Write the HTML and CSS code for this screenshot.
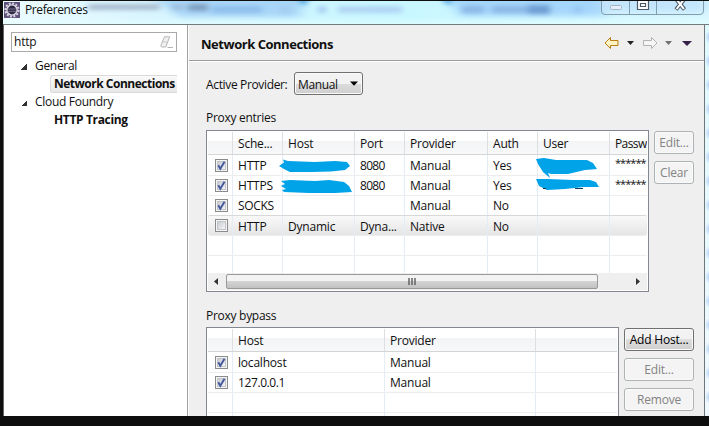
FILE: index.html
```html
<!DOCTYPE html>
<html lang="en">
<head>
<meta charset="utf-8">
<title>Preferences</title>
<link rel="stylesheet" href="styles.css">
</head>
<body>
<svg class="defs" width="0" height="0" aria-hidden="true">
  <defs>
    <linearGradient id="boxFill" x1="0" y1="0" x2="1" y2="1"><stop offset="0" stop-color="#c4c8d0"/><stop offset="1" stop-color="#f8f8f8"/></linearGradient>
    <symbol id="box" viewBox="0 0 13 13"><rect x=".5" y=".5" width="12" height="12" fill="#f4f4f4" stroke="#8b8c8e"/><rect x="2.5" y="2.5" width="8" height="8" fill="url(#boxFill)" stroke="#c3c5ca"/></symbol>
    <symbol id="checked" viewBox="0 0 13 13"><use href="#box"/><path d="M3.3 6.2l2 3.6L9.5 2.8" fill="none" stroke="#46599c" stroke-width="1.9"/></symbol>
  </defs>
</svg>
<div class="window">
  <header class="titlebar">
    <svg class="glass" width="706" height="23" viewBox="3 1 706 23" aria-hidden="true">
      <defs>
        <filter id="wide" x="-20%" y="-80%" width="140%" height="260%"><feGaussianBlur stdDeviation="6 3"/></filter>
        <filter id="soft" x="-20%" y="-80%" width="140%" height="260%"><feGaussianBlur stdDeviation="3 2"/></filter>
      </defs>
      <g filter="url(#wide)">
        <path d="M150 -4H305L300 17H180z" fill="#a8d6f8"/>
        <path d="M446 -4H606V16H460z" fill="#a5d6fb"/>
        <path d="M600 -4H705V12H600z" fill="#b9dffa"/>
      </g>
      <g filter="url(#soft)">
        <path d="M88 4H160V10H88z" fill="#a9bdd0"/><path d="M172 4H184V10H172z" fill="#9fbfdd"/><path d="M188 4H208V11H188z" fill="#7f9fc0"/>
        <path d="M212 6H262V13H212z" fill="#8fc0ec"/><path d="M280 6H290V13H280zM318 6H326V13H318z" fill="#a4ccf0"/><path d="M338 6H402V13H338z" fill="#b0d4f4"/>
        <path d="M440 -2H452L450 6zM296 -2H310L304 6z" fill="#4fa6e0"/>
        <path d="M462 6H484V13H462zM492 6H530V13H492z" fill="#8bb8e6"/><path d="M528 5H550V14H528z" fill="#6f9fd4"/><path d="M574 6H582V13H574z" fill="#95c6f2"/>
      </g>
    </svg>
    <svg class="app-icon" width="16" height="16" viewBox="0 0 16 16"><path d="M0 0h16v16H0z" fill="#5e507c"/><circle cx="8" cy="8" r="6.6" fill="none" stroke="#d8d3df" stroke-width="2" stroke-dasharray="2 1.45"/><circle cx="8" cy="8" r="5.1" fill="#2e2944" stroke="#e2dee8" stroke-width="1.4"/><path d="M3.5 7h9M3.5 9.3h9" stroke="#8982a2" stroke-width=".8"/></svg>
    <h1>Preferences</h1>
    <svg class="controls" width="104" height="15" viewBox="0 0 104 15"><path d="M.5 0v10q0 3.5 3.5 3.5h95q3.5 0 3.5-3.5V0M28.500 0v13M55.500 0v13" fill="#d7f0ff" fill-opacity=".35" stroke="#819dae"/><rect x="9.500" y="4.500" width="11" height="4" rx="1" fill="#e5effb" stroke="#a5b6c8"/><path d="M36.500-2h11V8.500h-11zM39.500 2.500h5v3h-5z" fill="#fff" stroke="#4d5967" stroke-width="1.200"/><path d="M75-2l8.500 10.500M83.500-2L75 8.500" stroke="#535b67" stroke-width="4"/><path d="M75.600-1.500l7.300 9.500M82.900-1.500l-7.300 9.500" stroke="#fff" stroke-width="2"/></svg>
  </header>
  <div class="body">
    <nav class="side">
      <div class="search"><span>http</span><svg width="14" height="13" viewBox="0 0 14 13"><path d="M4.500.8h5.200L5.800 11H1.500l-.7-1.500z" fill="#f0f0f0" stroke="#b5b5b5"/><path d="M3 6h4.500" stroke="#c8c8c8"/><path d="M7.500 11.500H13" stroke="#b5b5b5"/></svg></div>
      <ul class="tree">
        <li class="node"><i></i><span>General</span></li>
        <li class="leaf selected"><span>Network Connections</span></li>
        <li class="node"><i></i><span>Cloud Foundry</span></li>
        <li class="leaf tracing"><span>HTTP Tracing</span></li>
      </ul>
    </nav>
    <main class="page">
      <div class="page-head">
        <h2>Network Connections</h2>
        <svg width="90" height="14" viewBox="0 0 90 14"><path d="M2 7l5.500-5.500V4.500H15v5H7.500v3z" fill="#fff3c2" stroke="#bc7b13" stroke-linejoin="round"/><path d="M24 5h7l-3.500 4z" fill="#222"/><path d="M54 7l-5.500-5.500V4.500H40.500v5h8v3z" fill="#f6f6f6" stroke="#b2b2b2" stroke-linejoin="round"/><path d="M62 5h7l-3.500 4z" fill="#707070"/><path d="M79 5h10l-5 5z" fill="#342046"/></svg>
      </div>
      <div class="content">
        <div class="provider"><label>Active Provider:</label><div class="select"><span>Manual</span><svg width="8" height="5" viewBox="0 0 8 5"><path d="M0 .5h8L4 4.800z"/></svg></div></div>
        <div class="caption first">Proxy entries</div>
        <section class="group">
          <div class="table entries">
            <div class="row head"><b></b><b>Sche...</b><b>Host</b><b>Port</b><b>Provider</b><b>Auth</b><b>User</b><b class="pass">Passw</b></div>
            <div class="row"><b><svg><use href="#checked"/></svg></b><b>HTTP</b><b></b><b class="num">8080</b><b>Manual</b><b>Yes</b><b></b><b class="stars">******</b></div>
            <div class="row"><b><svg><use href="#checked"/></svg></b><b>HTTPS</b><b></b><b class="num">8080</b><b>Manual</b><b>Yes</b><b></b><b class="stars">******</b></div>
            <div class="row"><b><svg><use href="#checked"/></svg></b><b class="tight">SOCKS</b><b></b><b></b><b>Manual</b><b>No</b><b></b><b></b></div>
            <div class="row current"><b><svg><use href="#box"/></svg></b><b>HTTP</b><b>Dynamic</b><b>Dyna...</b><b>Native</b><b>No</b><b></b><b></b></div>
            <div class="row"><b></b><b></b><b></b><b></b><b></b><b></b><b></b><b></b></div>
            <div class="row last"><b></b><b></b><b></b><b></b><b></b><b></b><b></b><b></b></div>
            <div class="scroll"><svg width="4" height="7" viewBox="0 0 4 7"><path d="M4 0v7L0 3.500z" fill="#333"/></svg><div class="thumb"><svg width="8" height="7" viewBox="0 0 8 7"><path d="M1 0v7M4 0v7M7 0v7" stroke="#5a5a5a" stroke-width="1.400"/></svg></div><svg width="4" height="7" viewBox="0 0 4 7"><path d="M0 0v7l4-3.500z" fill="#333"/></svg></div>
            <svg class="marks" width="322" height="40" viewBox="279 155 322 40" fill="#00a2e8"><path d="M279 166l5-3.500-1-3 5 1.500 27 1 20-1 12 1 3 4-5 4-14 1.500-20 .5h-21l-6-3z"/><path d="M281 181l9-1 25 1 14-1 15 2 5 4 3 6-17 1h-26l-25-1-2-2 4-1-5-3 4-2z"/><path d="M536 159l8-1 12 2 31 0 6 3 4 6-12 1-17 4-17 0-3-1 2 5-7-6-5-8z"/><path d="M536 179l12 0 25 1 17 0 6 2 3 5-15 0-19 2-18 1-8-4z"/><path d="M543 188.500h3M575 188.500h8" fill="none" stroke="#173d58"/></svg>
          </div>
          <div class="buttons narrow"><button disabled>Edit...</button><button disabled>Clear</button></div>
        </section>
        <div class="caption second">Proxy bypass</div>
        <section class="group">
          <div class="table bypass">
            <div class="row head"><b></b><b>Host</b><b>Provider</b><b></b></div>
            <div class="row"><b><svg><use href="#checked"/></svg></b><b>localhost</b><b>Manual</b><b></b></div>
            <div class="row"><b><svg><use href="#checked"/></svg></b><b class="ip">127.0.0.1</b><b>Manual</b><b></b></div>
            <div class="row"><b></b><b></b><b></b><b></b></div>
            <div class="row"><b></b><b></b><b></b><b></b></div>
          </div>
          <div class="buttons"><button>Add Host...</button><button disabled>Edit...</button><button disabled>Remove</button></div>
        </section>
      </div>
    </main>
    <div class="edge"></div>
  </div>
</div>
</body>
</html>
```
FILE: styles.css
```css
* { box-sizing: border-box; }
body { margin: 0; width: 709px; height: 426px; overflow: hidden; background: #0d0e0d; font: 12px/16px "Open Sans", "Noto Sans", sans-serif; letter-spacing: -.2px; color: #101010; }
h1, h2, ul { margin: 0; padding: 0; font-size: 12px; }
svg { display: block; flex: none; }
.defs { position: absolute; }
.window { margin: 1px 0 0 3px; width: 706px; height: 415px; overflow: hidden; }
.titlebar { position: relative; height: 23px; display: flex; align-items: flex-start; overflow: hidden; padding: 1px 4px 0 1px; background: linear-gradient(90deg, #edfcff, #d9f5ff 20%, #c8f7ff 55%, #d9f8ff); }
.titlebar::after { content: ""; position: absolute; left: 0; right: 0; bottom: 0; height: 7px; background: linear-gradient(transparent, #e5ffff99); }
.glass { position: absolute; left: 0; top: 0; }
.app-icon, .titlebar h1, .controls { position: relative; }
.titlebar h1 { font-weight: 400; margin-left: 5px; letter-spacing: -.4px; }
.controls { margin: -1px 0 0 auto; }
.body { display: flex; height: 392px; border-top: 1px solid #737b7e; }
.side { width: 185px; padding: 7px 0 0 7px; background: #fff; border-left: 1px solid #666; border-right: 1px solid #a0a0a0; }
.search { width: 166px; height: 20px; display: flex; align-items: center; justify-content: space-between; border: 1px solid #aaa; padding: 0 2px; letter-spacing: -.2px; }
.tree { list-style: none; margin-top: 5px; width: 166px; }
.tree li { display: flex; align-items: center; height: 18px; }
.node { padding-left: 10px; letter-spacing: -.3px; }
.node i { width: 6px; height: 6px; background: linear-gradient(135deg, transparent 50%, #303030 50%); margin: 1px 8px 0 0; }
.leaf { font-weight: 700; margin-left: 39px; padding-left: 3px; border: 1px solid transparent; white-space: nowrap; letter-spacing: -.49px; }
.tracing { letter-spacing: -.35px; }
.selected { background: linear-gradient(#fafafa, #e8e8e8); border-color: #dadada; border-right: 0; border-radius: 3px 0 0 3px; }
.page { width: 516px; border-left: 1px solid #fff; background: #efefef; }
.page-head { display: flex; align-items: center; justify-content: space-between; height: 36px; padding: 0 11px 0 12px; border-bottom: 1px solid #9c9c9c; }
.page-head h2 { font-size: 13px; letter-spacing: -.47px; padding-top: 2px; }
.content { padding: 11px 10px 0 17px; border-top: 1px solid #fff; }
.provider { display: flex; align-items: center; height: 23px; margin-top: -1px; }
.provider label { width: 88px; letter-spacing: -.35px; white-space: nowrap; padding-top: 2px; }
.select { width: 69px; height: 23px; display: flex; align-items: center; justify-content: space-between; padding: 0 4px 0 3px; border: 1px solid #707070; border-radius: 3px; box-shadow: inset 0 0 0 1px #fafafa; background: linear-gradient(#f2f2f2 50%, #dcdcdc 50%, #cfcfcf); letter-spacing: -.35px; }
.select span { padding-top: 2px; }
.caption { letter-spacing: -.28px; height: 16px; }
.first { margin: 15px 0 4px; }
.second { margin: 16px 0 3px; }
.group { display: flex; gap: 5px; }
.table { position: relative; flex: none; border: 1px solid #828790; background: #fff; padding: 1px; }
.entries { width: 443px; height: 162px; }
.bypass { width: 413px; height: 101px; }
.row { display: grid; height: 20px; border-bottom: 1px solid #ededed; }
.entries .row { grid-template-columns: 25px 50px 72px 50px 83px 50px 72px 37px; }
.bypass .row { grid-template-columns: 25px 152px 151px 81px; }
.row b { font-weight: 400; padding-left: 5px; white-space: nowrap; overflow: hidden; line-height: 19px; border-right: 1px solid #e6ecf5; }
.row b:last-child { border-right: 0; }
.row b:first-child { padding: 3px 0 0 7px; }
.row b svg { width: 13px; height: 13px; }
.row.head { height: 23px; border-color: #d5d5d5; background: linear-gradient(#fff 40%, #f3f4f5 42%, #f7f8f9); }
.row.head b { line-height: 23px; border-color: #dedfe1; }
.row .pass { letter-spacing: -.6px; }
.row.head + .row { height: 21px; }
.row.head + .row b { line-height: 21px; }
.row.head + .row b:first-child { padding-top: 4px; }
.row.current { background: linear-gradient(#f9f9f9, #e5e5e5); border-radius: 3px; box-shadow: 0 -1px #d8d8d8; }
.row.current b { line-height: 21px; }
.row.last { height: 17px; border: 0; }
.num { letter-spacing: -.7px; }
.row .stars, .row.head + .row .stars { font-size: 11px; letter-spacing: -.95px; line-height: 16px; }
.tight { letter-spacing: -.35px; }
.row .ip { letter-spacing: -.4px; }
.scroll { height: 17px; display: flex; align-items: center; background: #efefef; padding-left: 6px; }
.scroll > svg:last-child { margin-left: 38px; }
.thumb { width: 372px; height: 15px; margin-left: 8px; display: flex; align-items: center; justify-content: center; border: 1px solid #999; border-radius: 2px; background: linear-gradient(#f3f3f3 45%, #d3d3d4 50%, #c2c2c4); }
.marks { position: absolute; left: 72px; top: 24px; }
.buttons { width: 70px; display: flex; flex-direction: column; gap: 7px; padding-top: 1px; }
.buttons.narrow { width: 40px; }
.buttons button { font: inherit; letter-spacing: -.2px; height: 23px; flex: none; padding: 0; white-space: nowrap; border: 1px solid #707070; border-radius: 3px; box-shadow: inset 0 0 0 1px #fafafa; background: linear-gradient(#f2f2f2 50%, #dddddd 50%, #cfcfcf); color: #000; }
.buttons button:disabled { border-color: #adb2b5; background: #f4f4f4; color: #838383; }
.edge { flex: 1; border-left: 1px solid #70777b; background: radial-gradient(ellipse 4px 7px at 100% 50%, #b9d4f5, transparent) 0 0 / 4px 24px, linear-gradient(#dffaff, #f0f9ff); }
```
